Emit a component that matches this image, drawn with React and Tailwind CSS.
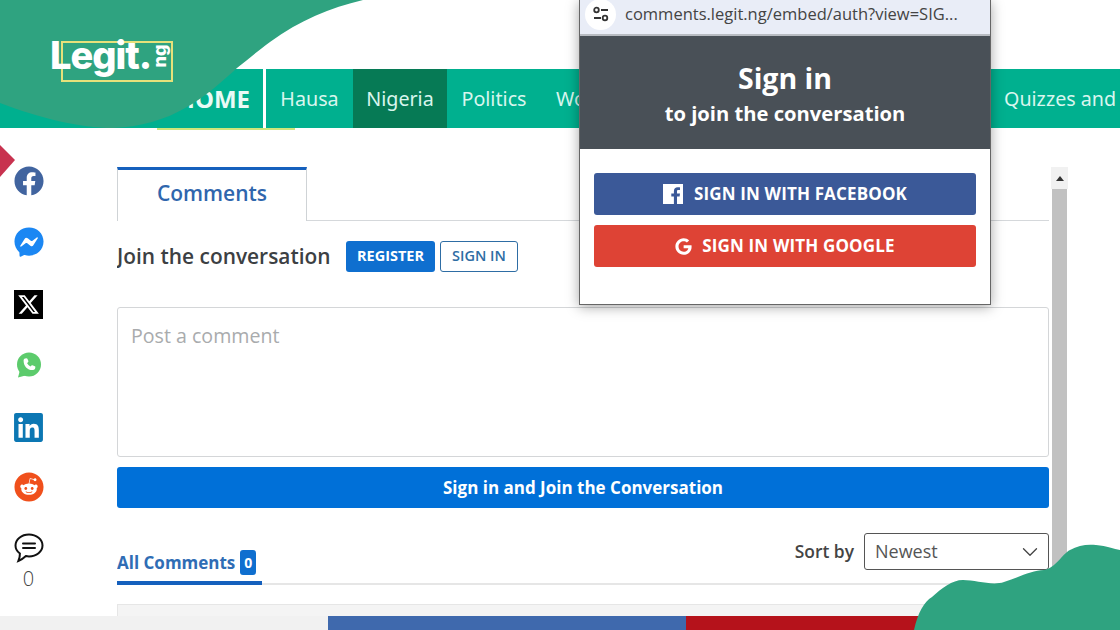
import React from "react";
import { FaFacebook, FaFacebookMessenger, FaLinkedin, FaReddit, FaGoogle } from "react-icons/fa";
import { FaXTwitter } from "react-icons/fa6";
import { ChevronDown } from "lucide-react";

const navItems = [
  { label: "Hausa", cls: "w-[87px]" },
  { label: "Nigeria", cls: "w-[94px] bg-[#067a55]" },
  { label: "Politics", cls: "w-[94px]" },
  { label: "World", cls: "w-[463px] justify-start pl-[15px]" },
  { label: "Quizzes and", cls: "flex-1 justify-start whitespace-nowrap" },
];

const Sidebar = () => (
  <div className="w-[117px] shrink-0 flex flex-col pl-[14px] pt-[39px]">
    <div className="h-[61px]"><FaFacebook size={30} className="text-[#41649f] -mt-[1px]" /></div>
    <div className="h-[62px]"><FaFacebookMessenger size={30} className="text-[#1b87f3] -mt-[1px]" /></div>
    <div className="h-[61px]">
      <div className="w-[29px] h-[29px] bg-black flex items-center justify-center">
        <FaXTwitter size={23} className="text-white" />
      </div>
    </div>
    <div className="h-[61px] pl-[1px]">
      <svg width="28" height="28" viewBox="0 0 28 28">
        <circle cx="14" cy="13.500" r="12" fill="#5ccb6c" />
        <path d="M3 26.500l2-7.500 5.500 5.500z" fill="#5ccb6c" />
        <path d="M10 7.500l1.500-.3c.4 0 .7.2.9.6l1 2.300c.1.4 0 .7-.3 1l-1 1.100c.7 1.400 1.800 2.500 3.300 3.300l1.100-1c.3-.3.6-.4 1-.3l2.300 1c.4.2.6.5.6.9l-.3 1.500c-.2.8-1 1.400-1.900 1.400C12.700 19.400 8.600 15.300 8.600 9.400c0-.9.6-1.700 1.400-1.900z" fill="#fff" />
      </svg>
    </div>
    <div className="h-[60px]"><FaLinkedin size={33} className="text-[#0c77b3] -ml-[2px] -mt-[1px]" /></div>
    <div className="h-[60px]"><FaReddit size={30} className="text-[#f0501c]" /></div>
    <svg className="mt-[1px]" width="30" height="30" viewBox="0 0 30 30" fill="none" stroke="#111" strokeWidth="2" strokeLinecap="round">
      <path d="M15 1.500C7.500 1.500 1.500 6.300 1.500 12.500c0 3.300 1.700 6 4.400 8 .2 2.500-.6 5-1.600 7.500 3-1 6-3.400 7.600-4.900 1 .2 2 .3 3.100.3 7.500 0 13.500-5 13.500-10.900S22.500 1.500 15 1.500z" />
      <path d="M9 10.500h12M9 15h12" />
    </svg>
    <div className="w-[29px] text-center text-[20px] leading-[24px] font-light text-[#444] mt-[4px]">0</div>
  </div>
);

const CommentsPanel = () => (
  <div className="w-[932px] shrink-0 pt-[39px] overflow-hidden">
    <div className="border-b border-[#d5d8db] h-[54px]">
      <div className="w-[190px] h-[54px] bg-white border-t-[3px] border-t-[#1560bd] border-x border-x-[#cfd3d6] flex items-center justify-center text-[21px] font-semibold text-[#2f66ad] pb-[3px]">
        Comments
      </div>
    </div>
    <div className="flex items-center mt-[19px] h-[32px]">
      <span className="w-[229px] text-[20.9px] font-semibold text-[#3c4043] whitespace-nowrap pt-[2px]">Join the conversation</span>
      <button className="w-[89px] h-[31px] bg-[#0f6fcf] rounded-[3px] text-white text-[14.5px] font-bold">REGISTER</button>
      <button className="w-[78px] h-[31px] ml-[5px] border border-[#2e6da4] rounded-[3px] text-[#2e6da4] text-[14.5px] font-semibold">SIGN IN</button>
    </div>
    <div className="mt-[35px] h-[150px] border border-[#d4d6d8] rounded-[3px] px-[13px] py-[15px] text-[19.6px] leading-[26px] text-[#a9abad]">
      Post a comment
    </div>
    <button className="w-full h-[41px] mt-[10px] bg-[#0070d8] rounded-[3px] text-white text-[17px] font-bold">
      Sign in and Join the Conversation
    </button>
    <div className="flex items-end justify-between mt-[25px] h-[52px] border-b-2 border-[#e6e6e6]">
      <div className="h-[52px] w-[145px] border-b-[4px] border-[#1560bd] -mb-[2px] flex items-end pb-[3px] gap-[5px]">
        <span className="text-[17px] font-bold text-[#2f6db5] leading-[30px] whitespace-nowrap">All Comments</span>
        <span className="w-[16px] h-[25px] mb-[3px] shrink-0 bg-[#0f6fcf] rounded-[3px] text-white text-[14px] font-bold flex items-center justify-center">0</span>
      </div>
      <div className="flex items-center self-start">
        <span className="text-[17.4px] font-semibold text-[#444] mr-[10px] whitespace-nowrap">Sort by</span>
        <div className="w-[185px] h-[37px] border border-[#555] rounded-[3px] pl-[10px] pr-[5px] flex items-center justify-between text-[18px] text-[#555]">
          Newest
          <ChevronDown size={26} strokeWidth={1.2} className="text-[#444]" />
        </div>
      </div>
    </div>
    <div className="mt-[19px] h-[20px] bg-[#f4f4f4] border border-[#e6e6e6]" />
  </div>
);

const Popup = () => (
  <div className="absolute top-0 left-[579px] w-[412px] h-[305px] bg-white border border-[#666] shadow-[0_2px_12px_rgba(0,0,0,0.35)] flex flex-col">
    <div className="h-[36px] shrink-0 bg-[#e9edf7] border-b-[2px] border-[#b8bcc2] flex items-center pl-[5px] pb-[6px] -mt-[1px]">
      <div className="w-[31px] h-[31px] shrink-0 rounded-full bg-white flex items-center justify-center">
        <svg width="18" height="16" viewBox="0 0 18 16" fill="none" stroke="#333" strokeWidth="1.800">
          <circle cx="4.500" cy="4" r="2.300" />
          <path d="M9 4h7M2 12h7" />
          <circle cx="13" cy="12" r="2.300" />
        </svg>
      </div>
      <span className="ml-[9px] text-[16.5px] text-[#444] whitespace-nowrap">comments.legit.ng/embed/auth?view=SIG...</span>
    </div>
    <div className="h-[113px] shrink-0 bg-[#495057] text-white text-center flex flex-col items-center pt-[23px]">
      <div className="text-[28.5px] font-bold leading-[38px]">Sign in</div>
      <div className="text-[20.2px] font-bold leading-[30px] mt-[1px]">to join the conversation</div>
    </div>
    <div className="flex flex-col gap-[10px] px-[14px] pt-[24px]">
      <button className="h-[42px] bg-[#3b5998] rounded-[3px] text-white flex items-center justify-center gap-[11px] text-[17px] tracking-[0.15px] font-bold">
        <svg width="20" height="20" viewBox="0 0 20 20" fill="#fff">
          <path d="M0 0h20v20h-6v-7.500h2.600l.4-3h-3V7.500c0-.9.3-1.400 1.500-1.400H17V3.400c-.3 0-1.200-.1-2.300-.1-2.300 0-3.800 1.400-3.800 3.900v2.300H8.300v3h2.600V20H0z" />
        </svg>
        SIGN IN WITH FACEBOOK
      </button>
      <button className="h-[42px] bg-[#de4335] rounded-[3px] text-white flex items-center justify-center gap-[10px] text-[17px] tracking-[0.15px] font-bold">
        <FaGoogle size={17} /> SIGN IN WITH GOOGLE
      </button>
    </div>
  </div>
);

const Logo = () => (
  <div className="absolute left-[50px] top-[28px] w-[125px] h-[56px] text-white font-['Inter',sans-serif]">
    <div className="absolute left-[11px] top-[13px] w-[112px] h-[41px] border-2 border-[#e6e17a]" />
    <span className="absolute left-0 top-[-3px] text-[38px] font-extrabold leading-[60px] tracking-[-1px]">Legit.</span>
    <span className="absolute left-[99px] top-[18px] text-[18px] font-extrabold leading-[20px] -rotate-90">ng</span>
  </div>
);

export default function App() {
  return (
    <div className="relative w-[1120px] h-[630px] overflow-hidden bg-white flex flex-col font-['Open_Sans',sans-serif]">
      <div className="h-[69px] shrink-0" />
      <div className="h-[59px] shrink-0 bg-[#00b08f] flex text-[19.7px] text-[#d8f6ee] font-['Noto_Sans',sans-serif]">
        <div className="relative w-[263px] shrink-0 flex items-center justify-end pr-[13px] font-bold text-[24px] text-[#e9fbf6]">
          HOME
          <div className="absolute left-[157px] top-[59px] w-[138px] h-[2px] bg-[#cfe67a]" />
        </div>
        <div className="w-[3px] shrink-0 bg-white" />
        {navItems.map((item) => (
          <div key={item.label} className={`flex items-center justify-center shrink-0 ${item.cls}`}>
            {item.label}
          </div>
        ))}
      </div>
      <div className="flex-1 min-h-0 flex">
        <Sidebar />
        <CommentsPanel />
        <div className="w-[17px] ml-[2px] mt-[39px] shrink-0 flex flex-col">
          <div className="h-[22px] bg-[#f1f1f1] flex items-center justify-center">
            <div className="w-0 h-0 border-x-[4px] border-x-transparent border-b-[5px] border-b-[#333]" />
          </div>
          <div className="flex-1 mx-[1px] bg-[#c1c1c1]" />
        </div>
      </div>
      <div className="h-[14px] shrink-0 bg-[#f1f1f1] flex pl-[328px]">
        <div className="w-[358px] bg-[#3f69ad]" />
        <div className="flex-1 bg-[#b5121b]" />
      </div>

      <div className="absolute left-0 top-[145px] w-[15px] h-[32px]">
        <svg width="15" height="32" viewBox="0 0 15 32"><path d="M0 0l15 15L0 32z" fill="#c8324f" /></svg>
      </div>
      <Popup />
      <svg className="absolute left-0 top-0" width="370" height="130" viewBox="0 0 370 130">
        <path d="M0 0H363C330 8 300 20 270 42C255 53 245 62 237 68C225 79 205 97 187 107C165 120 140 127 113 128C80 128 40 118 0 103Z" fill="#2fa380" />
      </svg>
      <Logo />
      <svg className="absolute left-[910px] top-[540px]" width="210" height="90" viewBox="0 0 210 90">
        <path d="M4 90C8 72 14 62 22 57C32 48 42 40 53 40C66 40 82 46 94 42C110 37 122 30 134 30C146 28 152 14 160 10C168 5 178 4 186 5C197 6 204 9 210 10V90Z" fill="#2fa380" />
      </svg>
    </div>
  );
}
